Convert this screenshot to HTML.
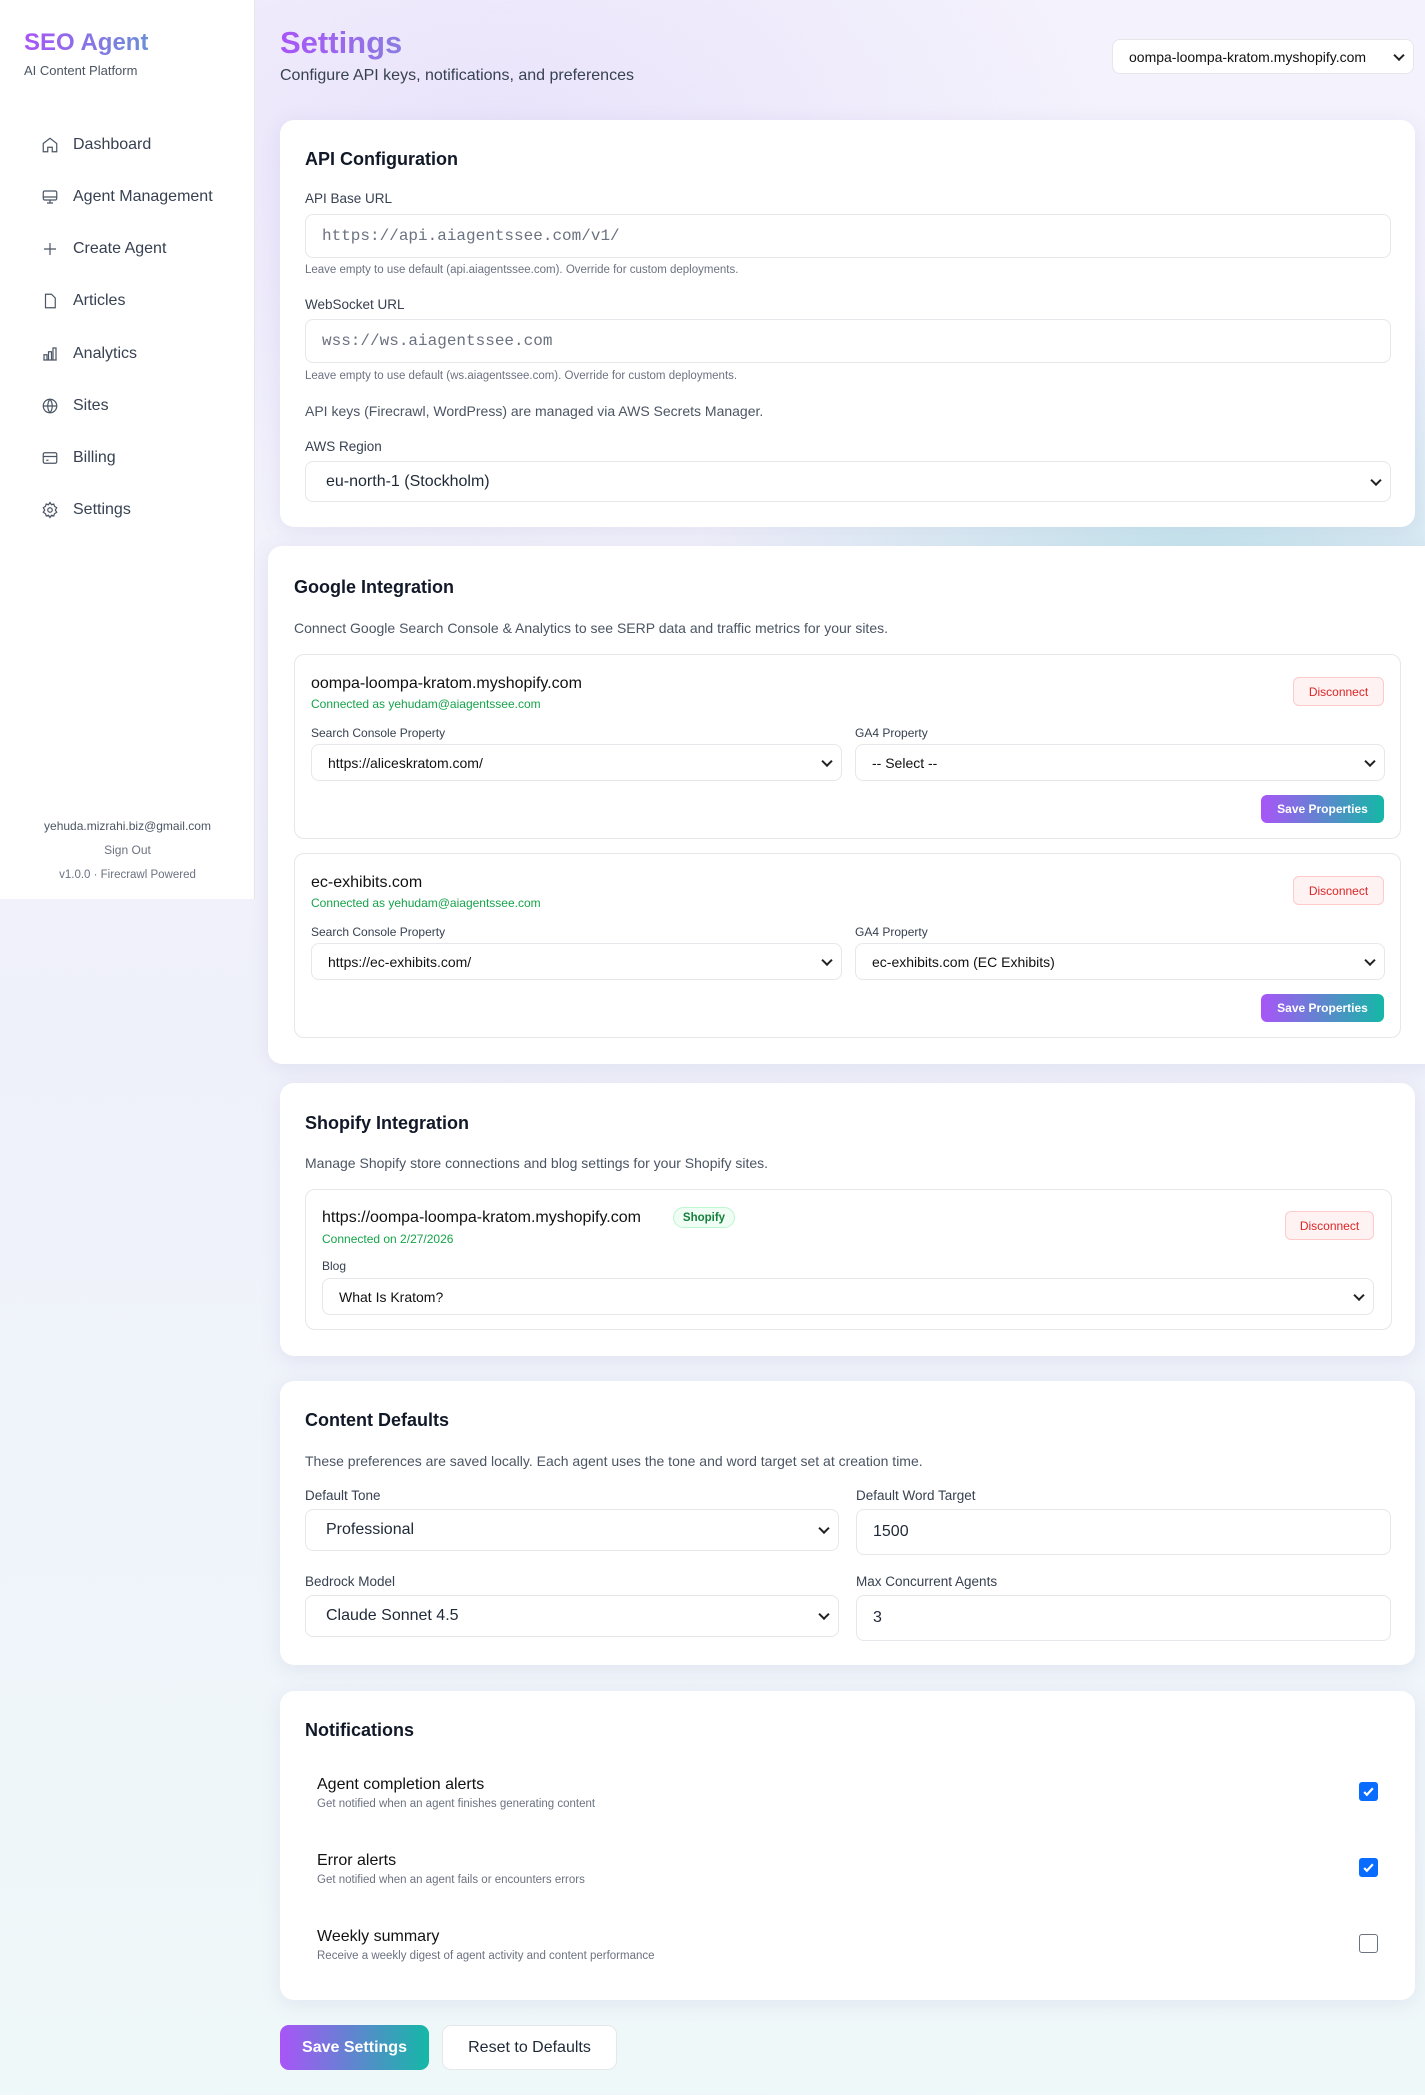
<!DOCTYPE html>
<html><head><meta charset="utf-8"><style>
*{box-sizing:border-box;margin:0;padding:0}
body{width:1425px;height:2095px;overflow:hidden;font-family:"Liberation Sans",sans-serif;color:#1f2937;position:relative;
background:radial-gradient(ellipse 500px 300px at 1200px 560px,rgba(160,220,225,.55),transparent),radial-gradient(ellipse 600px 400px at 500px 150px,rgba(228,220,250,.7),transparent),linear-gradient(180deg,#f4f2fc 0%,#eff1fa 50%,#eff8f9 100%)}
.a{position:absolute}
.side{left:0;top:0;width:255px;height:899px;background:#fff;border-right:1px solid #e5e7eb}
.logo{left:24px;top:29px;font-size:24px;font-weight:700;background:linear-gradient(90deg,#a855f7,#6b8fd6);-webkit-background-clip:text;color:transparent}
.nav{left:41px;font-size:16px;color:#374151;display:flex;align-items:center;gap:14px}
.nav svg{width:18px;height:18px;fill:none;stroke:#4b5563;stroke-width:1.6}
.card{background:#fff;border-radius:14px;box-shadow:0 4px 20px rgba(120,110,180,.12)}
.h{font-size:18px;font-weight:700;color:#111827}
.lbl{font-size:13.5px;color:#374151;font-weight:500}
.hint{font-size:11.5px;color:#6b7280}
.inp{background:#fff;border:1px solid #e5e7eb;border-radius:8px;font-size:16px;display:flex;align-items:center;padding-left:16px}
.mono{font-family:"Liberation Mono",monospace;color:#6b7280}
.sel::after{content:"";position:absolute;right:10px;top:50%;width:6px;height:6px;border-right:2px solid #222;border-bottom:2px solid #222;transform:translateY(-70%) rotate(45deg)}
.sub{border:1px solid #e5e7eb;border-radius:10px;background:#fff}
.dis{font-size:12px;color:#dc2626;background:#fef2f2;border:1px solid #fecaca;border-radius:6px;display:flex;align-items:center;justify-content:center}
.grad{background:linear-gradient(90deg,#a855f7,#14b8a6);color:#fff;font-weight:700;border-radius:6px;display:flex;align-items:center;justify-content:center}
.green{color:#16a34a;font-size:12px}
.cb{width:19px;height:19px;border-radius:3px;background:#0a6cff;display:flex;align-items:center;justify-content:center}
</style></head><body>
<div class="a side"></div>
<div class="a logo">SEO Agent</div>
<div class="a" style="left:24px;top:63px;font-size:13px;color:#4b5563">AI Content Platform</div>
<div class="a nav" style="top:136px"><svg viewBox="0 0 24 24"><path d="M3 10l9-7 9 7v11h-6v-6H9v6H3z"/></svg>Dashboard</div>
<div class="a nav" style="top:188px"><svg viewBox="0 0 24 24"><rect x="3" y="4" width="18" height="12" rx="2"/><path d="M3 12h18M8 20h8M12 16v4"/></svg>Agent Management</div>
<div class="a nav" style="top:240px"><svg viewBox="0 0 24 24"><path d="M12 4v16M4 12h16"/></svg>Create Agent</div>
<div class="a nav" style="top:292px"><svg viewBox="0 0 24 24"><path d="M6 3h8l5 5v13H6z"/></svg>Articles</div>
<div class="a nav" style="top:345px"><svg viewBox="0 0 24 24"><path d="M4 20V13h4v7M10 20V9h4v11M16 20V4h4v16M3 20h18"/></svg>Analytics</div>
<div class="a nav" style="top:397px"><svg viewBox="0 0 24 24"><circle cx="12" cy="12" r="9"/><path d="M3 12h18M12 3c-4 5-4 13 0 18M12 3c4 5 4 13 0 18"/></svg>Sites</div>
<div class="a nav" style="top:449px"><svg viewBox="0 0 24 24"><rect x="3" y="5" width="18" height="14" rx="2"/><path d="M3 10h18M7 15h3"/></svg>Billing</div>
<div class="a nav" style="top:501px"><svg viewBox="0 0 24 24"><circle cx="12" cy="12" r="3"/><path d="M12 2l2 3 3-1 1 3 3 2-2 3 2 3-3 2-1 3-3-1-2 3-2-3-3 1-1-3-3-2 2-3-2-3 3-2 1-3 3 1z"/></svg>Settings</div>
<div class="a" style="left:0;width:255px;top:819px;text-align:center;font-size:12px;color:#4b5563">yehuda.mizrahi.biz@gmail.com</div>
<div class="a" style="left:0;width:255px;top:843px;text-align:center;font-size:12px;color:#6b7280">Sign Out</div>
<div class="a" style="left:0;width:255px;top:869px;text-align:center;font-size:11.5px;color:#6b7280">v1.0.0 · Firecrawl Powered</div>

<div class="a" style="left:280px;top:25px;font-size:31px;font-weight:700;background:linear-gradient(90deg,#a855f7,#8b7ce0);-webkit-background-clip:text;color:transparent">Settings</div>
<div class="a" style="left:280px;top:67px;font-size:16px;color:#374151">Configure API keys, notifications, and preferences</div>
<div class="a inp sel" style="left:1112px;top:39px;width:302px;height:35px;font-size:14px;color:#111;padding-left:16px;font-weight:500">oompa-loompa-kratom.myshopify.com</div>

<div class="a card" style="left:280px;top:120px;width:1135px;height:407px"></div>
<div class="a h" style="left:305px;top:149px">API Configuration</div>
<div class="a lbl" style="left:305px;top:191px">API Base URL</div>
<div class="a inp mono" style="left:305px;top:214px;width:1086px;height:44px">https://api.aiagentssee.com/v1/</div>
<div class="a hint" style="left:305px;top:264px">Leave empty to use default (api.aiagentssee.com). Override for custom deployments.</div>
<div class="a lbl" style="left:305px;top:297px">WebSocket URL</div>
<div class="a inp mono" style="left:305px;top:319px;width:1086px;height:44px">wss://ws.aiagentssee.com</div>
<div class="a hint" style="left:305px;top:370px">Leave empty to use default (ws.aiagentssee.com). Override for custom deployments.</div>
<div class="a" style="left:305px;top:403px;font-size:14px;color:#4b5563">API keys (Firecrawl, WordPress) are managed via AWS Secrets Manager.</div>
<div class="a lbl" style="left:305px;top:439px">AWS Region</div>
<div class="a inp sel" style="left:305px;top:461px;width:1086px;height:41px;padding-left:20px">eu-north-1 (Stockholm)</div>

<div class="a card" style="left:268px;top:546px;width:1170px;height:518px"></div>
<div class="a h" style="left:294px;top:577px">Google Integration</div>
<div class="a" style="left:294px;top:620px;font-size:14px;color:#4b5563">Connect Google Search Console &amp; Analytics to see SERP data and traffic metrics for your sites.</div>

<div class="a sub" style="left:294px;top:654px;width:1107px;height:185px"></div>
<div class="a" style="left:311px;top:675px;font-size:16px;color:#111">oompa-loompa-kratom.myshopify.com</div>
<div class="a green" style="left:311px;top:697px">Connected as yehudam@aiagentssee.com</div>
<div class="a dis" style="left:1293px;top:677px;width:91px;height:29px">Disconnect</div>
<div class="a lbl" style="left:311px;top:726px;font-size:12px">Search Console Property</div>
<div class="a lbl" style="left:855px;top:726px;font-size:12px">GA4 Property</div>
<div class="a inp sel" style="left:311px;top:744px;width:531px;height:37px;font-size:14px;color:#111">https://aliceskratom.com/</div>
<div class="a inp sel" style="left:855px;top:744px;width:530px;height:37px;font-size:14px;color:#111">-- Select --</div>
<div class="a grad" style="left:1261px;top:795px;width:123px;height:28px;font-size:12px">Save Properties</div>

<div class="a sub" style="left:294px;top:853px;width:1107px;height:185px"></div>
<div class="a" style="left:311px;top:874px;font-size:16px;color:#111">ec-exhibits.com</div>
<div class="a green" style="left:311px;top:896px">Connected as yehudam@aiagentssee.com</div>
<div class="a dis" style="left:1293px;top:876px;width:91px;height:29px">Disconnect</div>
<div class="a lbl" style="left:311px;top:925px;font-size:12px">Search Console Property</div>
<div class="a lbl" style="left:855px;top:925px;font-size:12px">GA4 Property</div>
<div class="a inp sel" style="left:311px;top:943px;width:531px;height:37px;font-size:14px;color:#111">https://ec-exhibits.com/</div>
<div class="a inp sel" style="left:855px;top:943px;width:530px;height:37px;font-size:14px;color:#111">ec-exhibits.com (EC Exhibits)</div>
<div class="a grad" style="left:1261px;top:994px;width:123px;height:28px;font-size:12px">Save Properties</div>

<div class="a card" style="left:280px;top:1083px;width:1135px;height:273px"></div>
<div class="a h" style="left:305px;top:1113px">Shopify Integration</div>
<div class="a" style="left:305px;top:1155px;font-size:14px;color:#4b5563">Manage Shopify store connections and blog settings for your Shopify sites.</div>
<div class="a sub" style="left:305px;top:1189px;width:1087px;height:141px"></div>
<div class="a" style="left:322px;top:1209px;font-size:16px;color:#111">https://oompa-loompa-kratom.myshopify.com</div>
<div class="a" style="left:673px;top:1207px;width:62px;height:21px;border:1px solid #bbf7d0;background:#f0fdf4;border-radius:11px;font-size:11.5px;color:#15803d;display:flex;align-items:center;justify-content:center;font-weight:600">Shopify</div>
<div class="a green" style="left:322px;top:1232px">Connected on 2/27/2026</div>
<div class="a dis" style="left:1285px;top:1211px;width:89px;height:29px">Disconnect</div>
<div class="a lbl" style="left:322px;top:1259px;font-size:12px">Blog</div>
<div class="a inp sel" style="left:322px;top:1278px;width:1052px;height:37px;font-size:14px;color:#111">What Is Kratom?</div>

<div class="a card" style="left:280px;top:1381px;width:1135px;height:284px"></div>
<div class="a h" style="left:305px;top:1410px">Content Defaults</div>
<div class="a" style="left:305px;top:1453px;font-size:14px;color:#4b5563">These preferences are saved locally. Each agent uses the tone and word target set at creation time.</div>
<div class="a lbl" style="left:305px;top:1488px">Default Tone</div>
<div class="a lbl" style="left:856px;top:1488px">Default Word Target</div>
<div class="a inp sel" style="left:305px;top:1509px;width:534px;height:42px;padding-left:20px">Professional</div>
<div class="a inp" style="left:856px;top:1509px;width:535px;height:46px">1500</div>
<div class="a lbl" style="left:305px;top:1574px">Bedrock Model</div>
<div class="a lbl" style="left:856px;top:1574px">Max Concurrent Agents</div>
<div class="a inp sel" style="left:305px;top:1595px;width:534px;height:42px;padding-left:20px">Claude Sonnet 4.5</div>
<div class="a inp" style="left:856px;top:1595px;width:535px;height:46px">3</div>

<div class="a card" style="left:280px;top:1691px;width:1135px;height:309px"></div>
<div class="a h" style="left:305px;top:1720px">Notifications</div>
<div class="a" style="left:317px;top:1776px;font-size:16px;color:#111">Agent completion alerts</div>
<div class="a hint" style="left:317px;top:1798px">Get notified when an agent finishes generating content</div>
<div class="a cb" style="left:1359px;top:1782px"><svg width="13" height="13" viewBox="0 0 12 12"><path d="M2 6.5l2.5 2.5L10 3" fill="none" stroke="#fff" stroke-width="2"/></svg></div>
<div class="a" style="left:317px;top:1852px;font-size:16px;color:#111">Error alerts</div>
<div class="a hint" style="left:317px;top:1874px">Get notified when an agent fails or encounters errors</div>
<div class="a cb" style="left:1359px;top:1858px"><svg width="13" height="13" viewBox="0 0 12 12"><path d="M2 6.5l2.5 2.5L10 3" fill="none" stroke="#fff" stroke-width="2"/></svg></div>
<div class="a" style="left:317px;top:1928px;font-size:16px;color:#111">Weekly summary</div>
<div class="a hint" style="left:317px;top:1950px">Receive a weekly digest of agent activity and content performance</div>
<div class="a" style="left:1359px;top:1934px;width:19px;height:19px;border:1.5px solid #6b7280;border-radius:3px;background:#fff"></div>

<div class="a grad" style="left:280px;top:2025px;width:149px;height:45px;font-size:16px;border-radius:9px">Save Settings</div>
<div class="a" style="left:442px;top:2025px;width:175px;height:45px;background:#fff;border:1px solid #e5e7eb;border-radius:9px;font-size:16px;color:#1f2937;display:flex;align-items:center;justify-content:center;font-weight:500">Reset to Defaults</div>
</body></html>
